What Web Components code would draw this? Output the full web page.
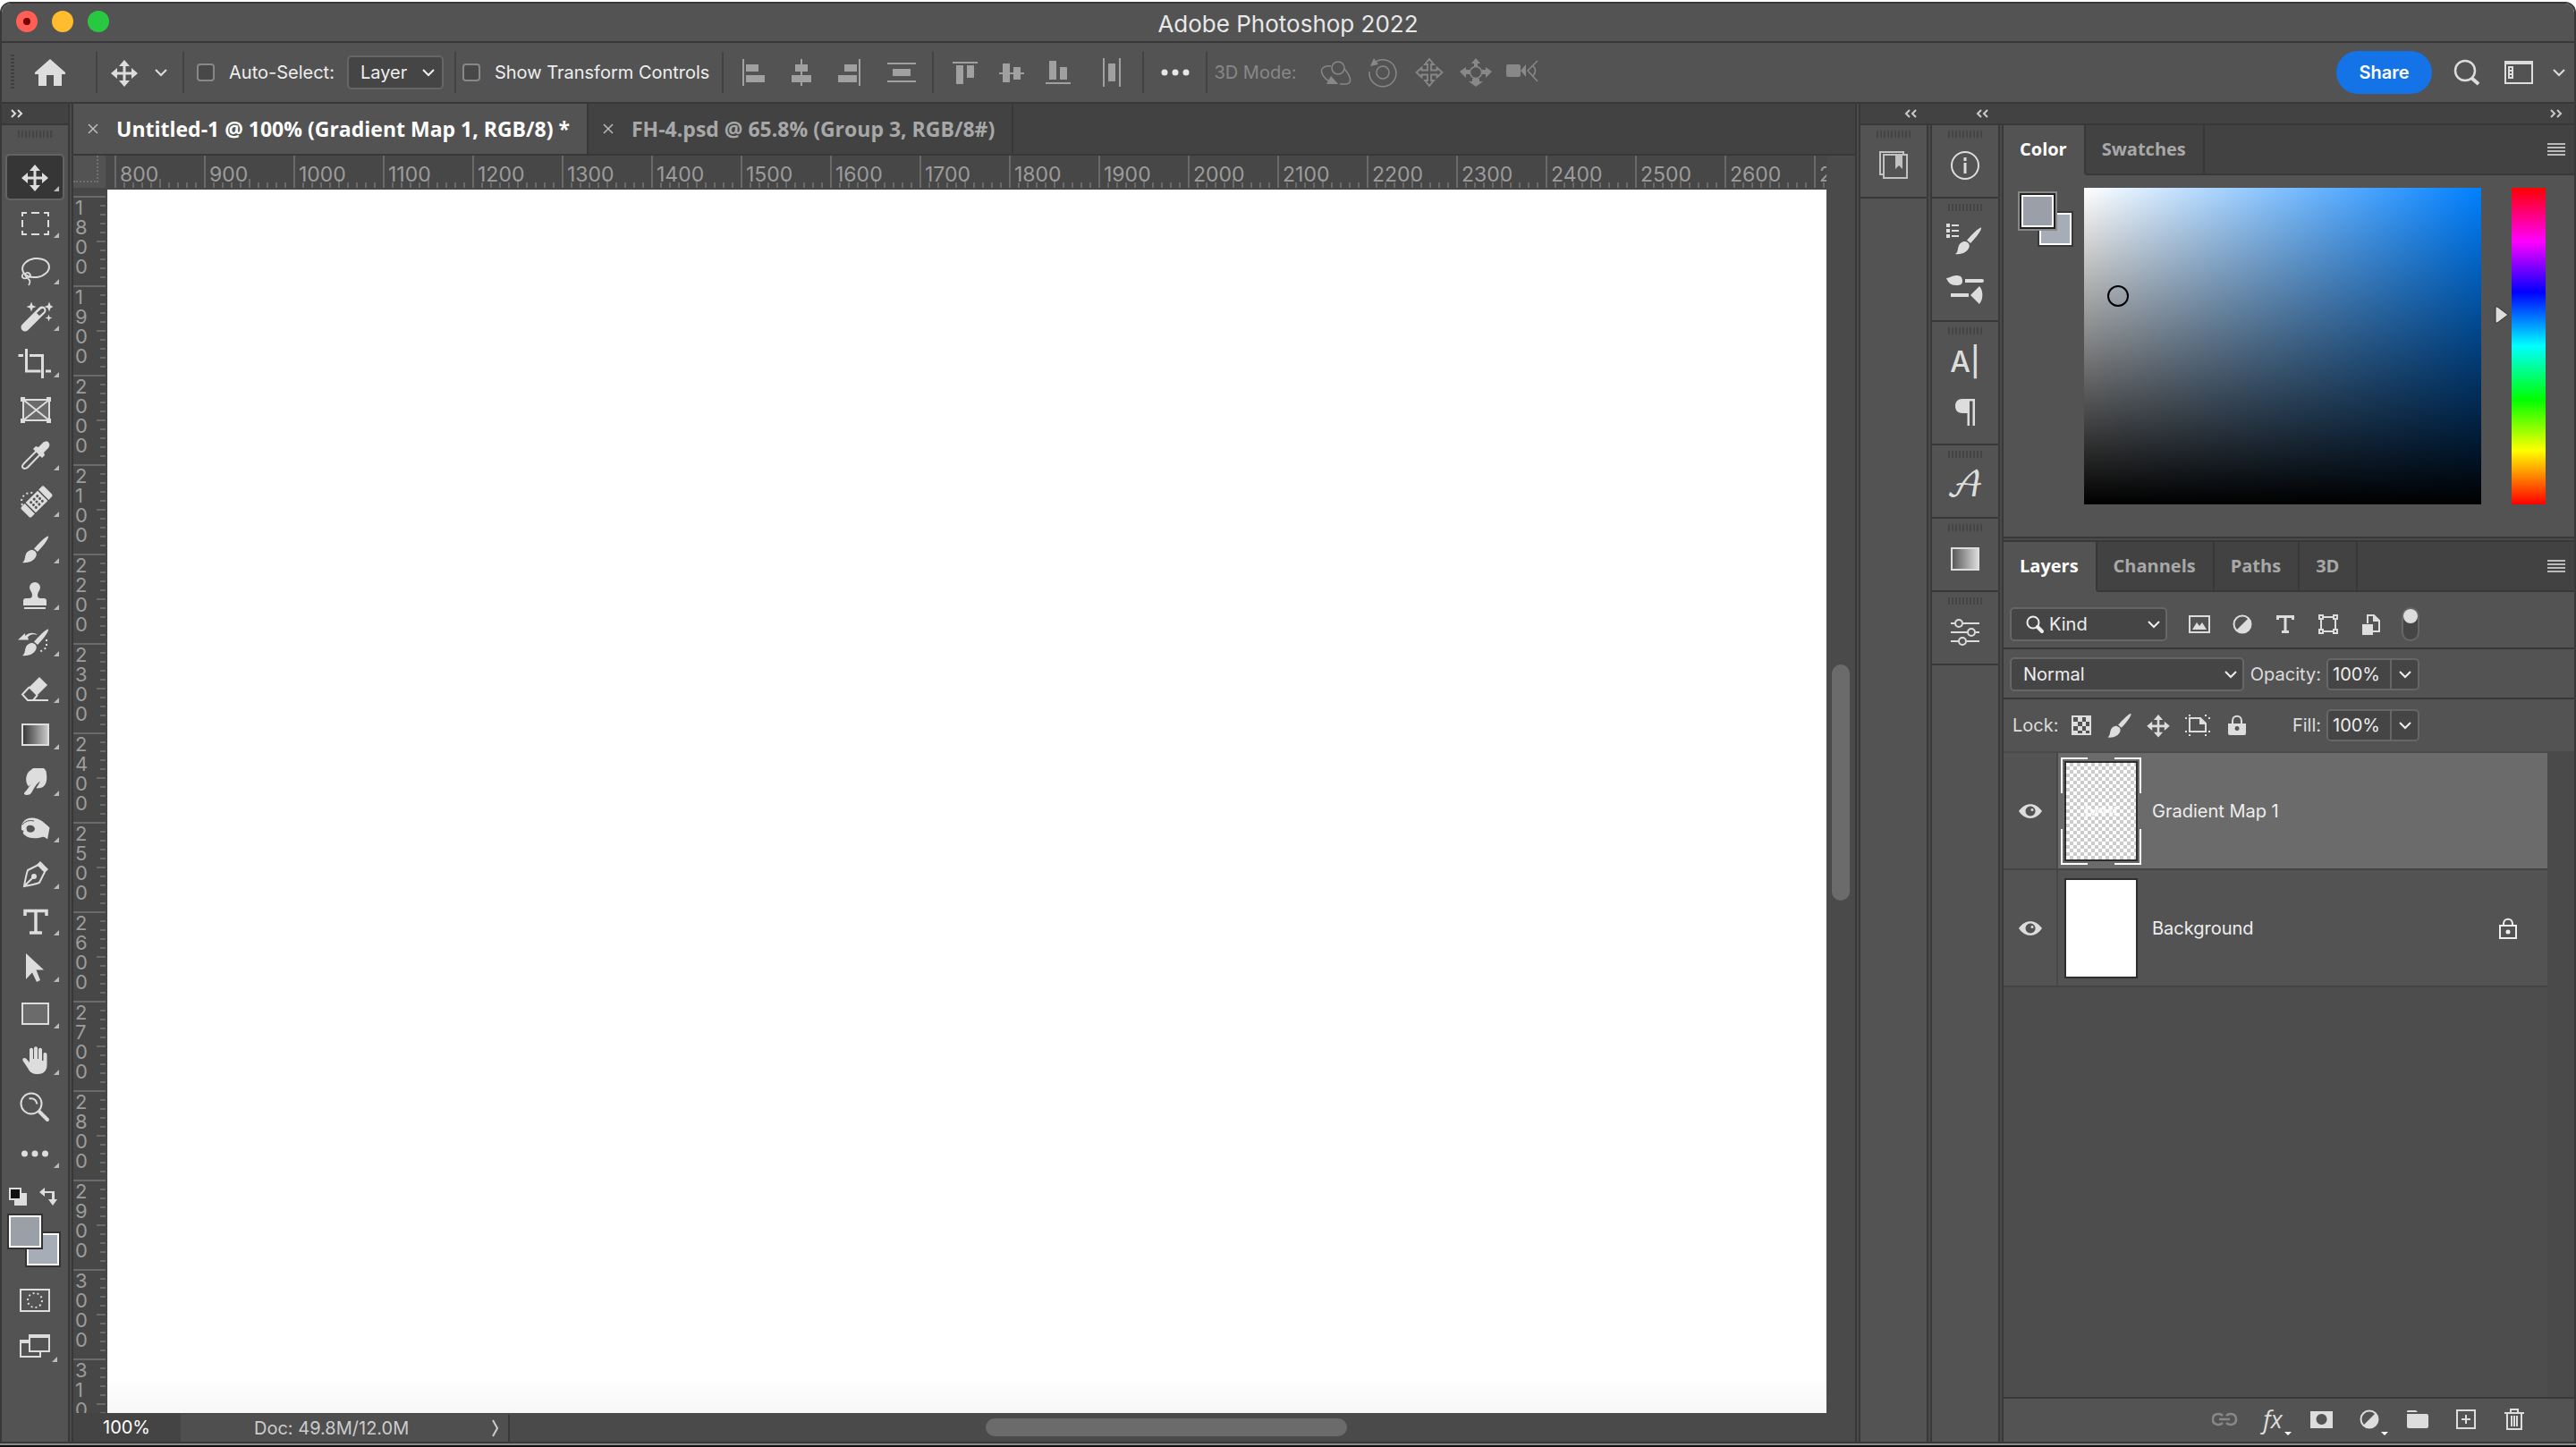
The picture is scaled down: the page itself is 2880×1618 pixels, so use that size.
<!DOCTYPE html>
<html lang="en">
<head>
<meta charset="utf-8">
<title>Adobe Photoshop 2022</title>
<style>
  body {
    margin: 0;
    background: #fff;
    color: #ddd;
    font: 20px/24px Inter, "Liberation Sans", sans-serif;
    --line: #383838;
    --bar: #535353;
    --dark: #424242;
    --gutter: #4a4a4a;
    --field: #454545;
    --edge: #666;
  }
</style>
</head>
<body>
<ps-app>
  <ps-title-bar slot="title">Adobe Photoshop 2022</ps-title-bar>
  <ps-options-bar slot="options"></ps-options-bar>
  <ps-toolbar></ps-toolbar>
  <ps-document>
    <ps-tab slot="tabs" closable selected>Untitled-1 @ 100% (Gradient Map 1, RGB/8) *</ps-tab>
    <ps-tab slot="tabs" closable>FH-4.psd @ 65.8% (Group 3, RGB/8#)</ps-tab>
  </ps-document>
  <ps-sidebar>
    <ps-dock slot="docks" groups="libraries"></ps-dock>
    <ps-dock slot="docks" groups="info|brushSettings,brushes|character,paragraph|glyphs|gradients|adjustments"></ps-dock>
    <ps-panel>
      <ps-tab slot="tabs" selected>Color</ps-tab>
      <ps-tab slot="tabs">Swatches</ps-tab>
      <ps-color-picker></ps-color-picker>
    </ps-panel>
    <ps-panel grow>
      <ps-tab slot="tabs" selected>Layers</ps-tab>
      <ps-tab slot="tabs">Channels</ps-tab>
      <ps-tab slot="tabs">Paths</ps-tab>
      <ps-tab slot="tabs">3D</ps-tab>
      <ps-layer-controls></ps-layer-controls>
      <ps-layer-list>
        <ps-layer selected thumb="transparent">Gradient Map 1</ps-layer>
        <ps-layer thumb="white" locked>Background</ps-layer>
      </ps-layer-list>
      <ps-layer-actions></ps-layer-actions>
    </ps-panel>
  </ps-sidebar>
</ps-app>

<script>
// name: [width, height, markup]. Shapes inherit fill: currentColor,
// anything in class="s" is stroked instead.
const MOVE = '<path d="M20 6l6 7h-4.500v6.500h6.500v-4.500l7 6l-7 6v-4.500h-6.500v6.500h4.500l-6 7l-6-7h4.500v-6.500h-6.500v4.500l-7-6l7-6v4.500h6.500v-6.500h-4.500z"/>'
const BRUSH = '<path d="M35 5.500c1 3-8 13.500-12 17.500l-4-3.500c5-5.500 13.500-14.500 16-14zM17.500 21c3.500 1 5 3.500 4 6.500c-1.500 5-8 8.500-15.500 7.500c3-2 2.500-4.500 3.500-8c1-4 4.500-6.500 8-6z"/>'

const ICONS = {
  move: [40, 40, MOVE],
  marquee: [40, 40, '<path class="s" d="M6 12V8h5M16 8h9M30 8h5v4M35 16v8M35 28v4h-5M25 32h-9M11 32H6v-4M6 24v-8"/>'],
  lasso: [40, 40, '<g class="s"><ellipse cx="21" cy="17.500" rx="15" ry="10.500" transform="rotate(-8 21 17.500)"/><path d="M7 24c-3 4 0 6 4 5c4-1 5-3 3-5c-2-2-5-1-5 1c0 4 9 5 4 12" style="stroke-width:1.800"/></g>'],
  wand: [40, 40, '<path class="s" d="M9 32L28 13" style="stroke-width:9;stroke-linecap:round"/><path d="M22 16l5-4.500c2-1.500 4.500.5 3 3l-5 4.500z" fill="#535353"/><path d="M16 3.500l1.500 4l4 1.500l-4 1.500l-1.500 4l-1.500-4l-4-1.500l4-1.500zM36 3.500l1.500 4l3 1.500l-3 1.500l-1.500 4l-1.500-4l-4-1.500l4-1.500zM35.500 17.500l1 3l3 1l-3 1l-1 3l-1-3l-3-1l3-1z"/>'],
  crop: [40, 40, '<path class="s" d="M1.500 11.500H7M10.500 4v25h16M32 29h6M14 11.500h14.500V37" style="stroke-width:3"/>'],
  frame: [40, 40, '<path d="M7 9h29v23H7z" fill="#6b6b6b"/><path class="s" d="M7 9h29v23H7zM7 9l29 23M36 9L7 32"/><path d="M4 6h5v5H4zM33 6h5v5h-5zM4 30h5v5H4zM33 30h5v5h-5z"/>'],
  eyedropper: [40, 40, '<path class="s" d="M22 14L8 28c-2 2-2.500 4-1.500 5c1 1.500 4 1 5.500-.5L26 18"/><path d="M18 12l3-3l3 1l4-4c3-3 6-3 7.500-1c1.500 2 1 4.500-1.500 7l-4 4l1 3l-3 3z"/>'],
  healing: [40, 40, '<g transform="rotate(-45 22 19)"><path d="M4 13q0-2 2-2h5v16H6q-2 0-2-2zM12.500 11h19v16h-19zM33 11h5q2 0 2 2v12q0 2-2 2h-5z"/><g fill="#535353"><circle cx="17" cy="15" r="1.500"/><circle cx="22" cy="15" r="1.500"/><circle cx="27" cy="15" r="1.500"/><circle cx="17" cy="19" r="1.500"/><circle cx="22" cy="19" r="1.500"/><circle cx="27" cy="19" r="1.500"/><circle cx="17" cy="23" r="1.500"/><circle cx="22" cy="23" r="1.500"/><circle cx="27" cy="23" r="1.500"/></g></g><path class="s" d="M6 23C3 16 7 8 19 9" style="stroke-dasharray:2 3"/>'],
  brush: [40, 40, BRUSH],
  stamp: [40, 40, '<path d="M20 5a6 6 0 0 1 6 6c0 3-3 5-3 8c0 3 1 4 4 4h3q3 0 3 3v5H7v-5q0-3 3-3h3c3 0 4-1 4-4c0-3-3-5-3-8a6 6 0 0 1 6-6zM8 33h24v2H8z"/>'],
  history: [40, 40, BRUSH + '<path d="M1 17.500L9 10v3c5-4 10-4 14-1c-5-1.500-8-1-11 2.500l1 3z"/><path class="s" d="M33 17v9L24 32" style="stroke-dasharray:2 3"/>'],
  eraser: [40, 40, '<path d="M25 7l9 9l-12 12l-9-9z"/><path class="s" d="M14 18l-8 8.500l6 6.500h6l5-6M11 33h24"/>'],
  gradient: [40, 40, '<defs><linearGradient id="g"><stop stop-color="#333"/><stop offset="1" stop-color="#ccc"/></linearGradient></defs><path class="s" d="M6 8h29v23H6z" style="fill:url(#g)"/>'],
  smudge: [40, 40, '<path d="M13 9l5-4h12l2.500 3c1.500 8 1.500 17-6 19l-4.500.5c-1 0 0-1.500 1-2.500l3-5.500c-4 2-7 8-9 11.500c-1.500 3-3.500 4-6.500 4c-3.500-.5-3-2.500-.5-4.500l6-8l-3 3c-4-5-3.500-12 0-16.500z"/>'],
  sponge: [40, 40, '<path fill-rule="evenodd" d="M5 22c-1-8 4-14 13-13.500c8 .5 13 6 18.500 11L34 32.500c-2-2-4-3-6-2.500c-6 2-15 2-19-2c-2-1-3-3-1.500-5zM13 17c-3 1-3 4-1 7c4 2 8 0 8-3.500c-1-3.500-4-4-7-3.500z"/><path d="M6 16q5-6 13-4" stroke="#535353" fill="none"/>'],
  pen: [40, 40, '<path class="s" d="M24 9L12 15C10 21 9 27 8 33c6-1 12-2 17-4l6-12M8 33l10-10"/><path d="M22 9l4-4l9 9l-4 4z"/><circle cx="19" cy="22" r="3"/>'],
  type: [40, 40, '<path class="s" d="M9 14V8.500h24V14M21 8.500V32M14 33h14" style="stroke-width:3.500"/>'],
  pathSelect: [40, 40, '<path d="M10 4l20 18.500h-8.500L26 34l-4 2l-5-10.500L10 33z"/>'],
  rectangle: [40, 40, '<path class="s" d="M6 8h29v23H6z" style="fill:#6b6b6b"/>'],
  hand: [40, 40, '<path d="M14 22V8c0-3 4-3 4 0v10h1V6.500c0-3 4-3 4 0V18h1V8c0-3 4-3 4 0v12l1.500 0V13c0-3 4-2 4 0v12c0 7-5 10-10 10c-6 0-9-2-11-6L6.500 20c-1-3 2-4 4-2z"/>'],
  zoom: [40, 40, '<g class="s"><circle cx="16" cy="16" r="11.500"/><path d="M13.500 10.500c5-1 8 2 9 6"/><path d="M25 25l9 9" style="stroke-width:4;stroke-linecap:round"/></g>'],
  more: [40, 40, '<circle cx="8.500" cy="20" r="3.500"/><circle cx="20" cy="20" r="3.500"/><circle cx="31.500" cy="20" r="3.500"/>'],

  corner: [6, 6, '<path d="M6 0v6H0z"/>'],
  defaults: [20, 20, '<path d="M6 6h14v14H6z"/><path d="M1 1h12v12H1z" fill="#111" stroke="#ddd" stroke-width="2"/>'],
  swap: [20, 20, '<path d="M0 5l6-5v4h11v9h3l-5 7l-5-7h4V6H6v4z"/>'],
  quickMask: [34, 26, '<path class="s" d="M1 1h32v24H1z"/><circle class="s" cx="17" cy="13" r="8" style="stroke-dasharray:2 3"/>'],
  screen: [34, 26, '<path class="s" d="M11 7H1v18h22v-6M11 2h22v17H11z"/><path d="M10 0h24v4H10zM0 6h10v4H0z"/>'],

  home: [34, 30, '<path d="M17 0l17 15v2h-4v13H21V18H13v12H4V17H0v-2z"/>'],
  chevron: [14, 8, '<path class="s" d="M1 1l6 6l6-6"/>'],
  chevronRight: [10, 20, '<path class="s" d="M2 1l5 9l-5 9"/>'],
  alignLeft: [28, 30, '<path d="M0 0h2v30H0zM4 6h14v8H4zM4 18h21v8H4z"/>'],
  alignCenter: [28, 30, '<path d="M13 0h2v30h-2zM7 6h14v8H7zM3 18h22v8H3z"/>'],
  alignRight: [28, 30, '<path d="M26 0h2v30h-2zM10 6h14v8H10zM3 18h21v8H3z"/>'],
  distributeV: [32, 22, '<path d="M0 0h32v2H0zM6 7h20v8H6zM0 20h32v2H0z"/>'],
  alignTop: [28, 30, '<path d="M0 3h28v2H0zM4 7h8v21H4zM16 7h8v14h-8z"/>'],
  alignMiddle: [28, 30, '<path d="M0 15h28v2H0zM4 5h8v21H4zM16 9h8v14h-8z"/>'],
  alignBottom: [28, 30, '<path d="M0 26h28v2H0zM4 2h8v21H4zM16 9h8v14h-8z"/>'],
  distributeH: [20, 32, '<path d="M0 0h2v32H0zM18 0h2v32h-2zM6 6h8v20H6z"/>'],
  dots: [32, 8, '<circle cx="4" cy="4" r="3.500"/><circle cx="16" cy="4" r="3.500"/><circle cx="28" cy="4" r="3.500"/>'],
  orbit: [36, 32, '<g class="s" style="stroke-width:1.500"><circle cx="20" cy="11" r="7"/><path d="M12 9C4 8 0 12 2 17c1 4 4 6 8 9M27 12c7 8 10 17 1 17h-6"/></g><path d="M7 29l5-9l8 9z"/>'],
  roll: [34, 32, '<g class="s" style="stroke-width:1.500"><circle cx="17" cy="16" r="7"/><path d="M9 4a15 15 0 1 1-7 11"/></g><path d="M3 9L7 0l5 7z"/>'],
  pan: [34, 34, '<path class="s" style="stroke-width:1.800" transform="translate(-3 -4)" d="M20 6l5 6h-3v6.500h6.500v-3l6 5.500l-6 5.500v-3h-6.500v6.500h3l-5 6l-5-6h3v-6.500h-6.500v3l-6-5.500l6-5.500v3h6.500v-6.500h-3z"/>'],
  slide: [36, 32, '<circle class="s" cx="18" cy="16" r="6.500" style="stroke-width:1.500"/><path d="M18 0l5 6h-3v3h-4V6h-3zM18 32l-8-6h4v-3h8v3h4zM0 15l7-5v3h4v5H7v4zM36 15l-7-5v3h-4v5h4v4z"/>'],
  camera: [36, 28, '<path d="M0 7q0-2 2-2h12q2 0 2 2v10q0 2-2 2H2q-2 0-2-2zM16 12l6-7v14z"/><path class="s" d="M35 1L24 12l11 12M30 7q5 4 0 11" style="stroke-width:1.500"/>'],
  search: [30, 28, '<g class="s"><circle cx="13" cy="12" r="11" style="stroke-width:2.500"/><path d="M20 20l8 7" style="stroke-width:4"/></g>'],
  workspace: [32, 26, '<path class="s" d="M1 1h30v24H1z"/><path d="M0 0h32v4H0z"/><path d="M4 6h6v14H4zM6 8v2h2V8zM6 12v2h2v-2zM6 16v2h2v-2z" fill-rule="evenodd"/>'],
  menu: [20, 14, '<path d="M0 0h20v2H0zM0 4h20v2H0zM0 8h20v2H0zM0 12h20v2H0z"/>'],
  close: [12, 12, '<path class="s" d="M1 1l10 10M11 1L1 11" style="stroke-width:1.500"/>'],
  expand: [16, 10, '<path class="s" d="M2 1l4 4l-4 4M9 1l4 4l-4 4"/>'],
  collapse: [16, 10, '<path class="s" d="M7 1L3 5l4 4M14 1l-4 4l4 4"/>'],

  libraries: [32, 32, '<g opacity=".8"><path class="s" d="M5 4h26v26H5zM4 26H1V1h26v3"/><path d="M18 4h8v16l-4-4l-4 4z"/></g>'],
  info: [34, 34, '<circle class="s" cx="17" cy="17" r="15"/><path d="M15.500 8h3v4h-3zM15.500 14h3v12h-3z"/>'],
  brushSettings: [42, 36, '<path d="M0 1h4v4H0zM6 2h8v2H6zM0 7h4v4H0zM6 8h8v2H6zM0 13h4v4H0zM6 14h8v2H6z"/><g transform="translate(4 0)">' + BRUSH + '</g>'],
  brushes: [42, 34, '<g transform="translate(0 2)"><path d="M0 3c4 0 6-3 11-3c5 0 7 2 7 6s-2 5-7 5C5 11 2 8 0 3zM21 4h19q2 0 2 2t-2 2H21zM5 20h20v4H5zM27 22l10-10c4 4 5 14 0 20z"/></g>'],
  paragraph: [24, 32, '<path d="M23 1v30h-2.500V3.500H17V31h-2.500V17H9C4 17 1 14 1 9s3-8 8-8z"/>'],
  gradients: [32, 26, '<defs><linearGradient id="g"><stop stop-color="#555"/><stop offset="1" stop-color="#ddd"/></linearGradient></defs><path class="s" d="M1 1h30v24H1z" style="fill:url(#g)"/>'],
  adjustments: [32, 32, '<g class="s"><path d="M0 6h4M14 6h18M0 16h18M28 16h4M0 26h8M18 26h14"/><circle cx="9" cy="6" r="4"/><circle cx="23" cy="16" r="4"/><circle cx="13" cy="26" r="4"/></g>'],

  find: [20, 20, '<g class="s"><circle cx="8" cy="8" r="6.500"/><path d="M13 13l5 5" style="stroke-width:4;stroke-linecap:round"/></g>'],
  image: [24, 20, '<path class="s" d="M1 1h22v18H1z"/><path d="M4 16l5-8l3 4l3-4l5 8z"/>'],
  adjust: [22, 22, '<circle class="s" cx="11" cy="11" r="9.500"/><path d="M18 4L4 18A9.500 9.500 0 0 0 18 4z"/>'],
  text: [20, 22, '<path class="s" d="M1.500 6V2.500h17V6M10 2v17M6 19.500h8" style="stroke-width:3"/>'],
  shape: [24, 24, '<g class="s"><path d="M6 4h12M20 6v12M18 20H6M4 18V6"/><path d="M2 2h4v4H2zM18 2h4v4h-4zM2 18h4v4H2zM18 18h4v4h-4z"/></g>'],
  smart: [20, 24, '<path class="s" d="M6 11V2h7l6 6v12h-7"/><path d="M12 1v8h8zM0 12h12v12H0z"/>'],
  checker: [22, 22, '<path fill-rule="evenodd" d="M0 0h22v22H0zM2 2v5h5V2zM12 2v5h4V2zM7 7v5h5V7zM16 7v5h4V7zM2 12v5h5v-5zM12 12v5h4v-5zM7 17v3h5v-3zM16 17v3h4v-3z"/>'],
  artboard: [28, 24, '<path class="s" d="M5 4h12l6 6v9H5z"/><path d="M16 3v8h8zM4 0h2v2H4zM0 3h2v2H0zM22 0h2v2h-2zM26 3h2v2h-2zM0 18h2v2H0zM4 22h2v2H4zM26 18h2v2h-2zM22 22h2v2h-2z"/>'],
  lock: [20, 24, '<path class="s" d="M5 11V7c0-7 10-7 10 0v4"/><path fill-rule="evenodd" d="M0 10h20v11q0 2-2 2H2q-2 0-2-2zM10 13a2.500 2.500 0 1 0 .1 0z"/>'],
  lockOutline: [20, 24, '<g class="s"><path d="M5 8V7c0-7 10-7 10 0v1M1 9h18v14H1z"/></g><circle cx="10" cy="16" r="2.500"/>'],
  eye: [26, 16, '<path fill-rule="evenodd" d="M0 8C7-2.500 19-2.500 26 8C19 18.500 7 18.500 0 8zM13 2.500a5.500 5.500 0 1 0 .1 0z"/><circle cx="15" cy="6.500" r="1.500"/>'],
  link: [28, 14, '<g class="s"><path d="M12 3C9 0 1 0 1 7s8 7 11 4M16 3c3-3 11-3 11 4s-8 7-11 4M8 7h12" style="stroke-width:2.500"/></g>'],
  mask: [25, 20, '<path fill-rule="evenodd" d="M0 1h25v19H0zM12.500 4a6 6 0 1 0 .1 0z"/>'],
  folder: [24, 20, '<path d="M0 1q0-1 2-1h8l2 2H0zM0 4h22q2 0 2 2v12q0 2-2 2H2q-2 0-2-2z"/>'],
  plus: [22, 22, '<path class="s" d="M1 1h20v20H1zM11 6v10M6 11h10"/>'],
  trash: [22, 24, '<path class="s" d="M0 5h22M7 4V1h8v3M3 6v17h16V6M8 8v12M11 8v12M14 8v12"/>'],
  down: [8, 4, '<path d="M0 0h8L4 4z" fill="#fff"/>']
}

const icon = (name, scale = 1) => {
  const [w, h, markup] = ICONS[name]
  return `<svg class="icon" aria-hidden="true" width="${w * scale}" height="${h * scale}" viewBox="0 0 ${w} ${h}">${markup}</svg>`
}

const BASE = `
  * { box-sizing: border-box; }
  button {
    display: flex; align-items: center; justify-content: center;
    margin: 0; padding: 0; border: 0; background: none;
    color: inherit; font: inherit; cursor: pointer;
  }
  .icon { display: block; flex: none; fill: currentColor; overflow: visible; }
  .s { fill: none; stroke: currentColor; stroke-width: 2; }
  .grip {
    width: 38px; height: 8px; margin: 0 auto;
    background: repeating-linear-gradient(90deg, #444 0 2px, transparent 2px 4px);
  }
`

/**
 * Shared base: attaches an open root and fills it from render().
 */
class PsElement extends HTMLElement {
  connectedCallback () {
    if (this.shadowRoot) return
    this.attachShadow({ mode: 'open' }).innerHTML =
      `<style>${BASE}${this.styles()}</style>${this.render()}`
  }
  styles () { return '' }
  render () { return '<slot></slot>' }
}

customElements.define('ps-app', class extends PsElement {
  styles () {
    return `
      :host {
        display: flex; flex-direction: column;
        box-sizing: border-box; height: 100vh; padding-top: 2px;
        border-bottom: 2px solid #111;
      }
      .window {
        flex: 1; min-height: 0; display: flex; flex-direction: column;
        border: 2px solid var(--line); border-radius: 12px 12px 0 0; overflow: hidden;
      }
      .shade { height: 2px; background: #8a8a8a; }
      main { flex: 1; min-height: 0; display: flex; gap: 2px; background: var(--gutter); }
    `
  }
  render () {
    return `
      <div class="window">
        <slot name="title"></slot>
        <slot name="options"></slot>
        <main><slot></slot></main>
      </div>
      <div class="shade"></div>`
  }
})

customElements.define('ps-title-bar', class extends PsElement {
  styles () {
    return `
      :host {
        display: grid; grid-template-columns: 1fr auto 1fr; align-items: center;
        height: 44px; box-sizing: border-box; padding: 0 16px;
        background: var(--bar); border-bottom: 2px solid var(--line);
      }
      .lights { display: flex; gap: 16px; padding-bottom: 2px; }
      .lights button { width: 24px; height: 24px; border-radius: 50%; background: #28c840; }
      .lights .close { background: #ff5f57; }
      .lights .close::after { content: ""; width: 8px; height: 8px; border-radius: 50%; background: #700; }
      .lights .min { background: #febc2e; }
      h1 { margin: 0; padding-top: 3px; font-size: 26px; line-height: 32px; font-weight: 400; color: #e8e8e8; }
    `
  }
  render () {
    return `
      <div class="lights">
        <button class="close" aria-label="Close"></button>
        <button class="min" aria-label="Minimize"></button>
        <button aria-label="Zoom"></button>
      </div>
      <h1><slot></slot></h1>`
  }
})

customElements.define('ps-options-bar', class extends PsElement {
  styles () {
    return `
      :host {
        display: flex; align-items: center; height: 68px; box-sizing: border-box;
        padding: 0 10px; background: var(--bar); border-bottom: 2px solid var(--line);
        color: #eee; white-space: nowrap;
      }
      .dots { width: 4px; height: 40px; background: repeating-linear-gradient(#404040 0 2px, transparent 2px 4px); }
      .home { margin: 0 34px 0 23px; color: #ddd; }
      hr { width: 2px; height: 46px; margin: 0; border: 0; background: #424242; }
      .preset { gap: 14px; padding: 0 17px 0 10px; color: #ddd; }
      .check { display: flex; align-items: center; gap: 16px; }
      .auto { padding: 0 14px; }
      .transform { padding: 0 14px 0 7px; }
      input {
        appearance: none; width: 20px; height: 20px; margin: 0;
        border: 2px solid #888; border-radius: 4px; background: #484848;
      }
      .pick {
        display: flex; align-items: center; width: 108px; height: 38px; margin-right: 12px;
        padding-right: 8px; background: var(--field); border: 2px solid var(--edge); border-radius: 5px;
      }
      .pick .icon { margin-left: -14px; pointer-events: none; }
      select {
        appearance: none; flex: 1; min-width: 0; height: 100%; padding: 0 14px 0 13px;
        border: 0; background: none; color: inherit; font: inherit;
      }
      .group { display: flex; padding-left: 9px; color: #a0a0a0; }
      .group button { width: 52px; height: 40px; }
      .group button:last-child { width: 68px; }
      .more { width: 69px; height: 40px; color: #e8e8e8; }
      .mode { display: flex; align-items: center; padding-left: 7px; color: #888; }
      .mode span { margin-right: 18px; }
      .mode button { width: 52px; height: 40px; }
      .end { display: flex; align-items: center; margin-left: auto; color: #ddd; }
      .share {
        width: 107px; height: 48px; margin-right: 24px; border-radius: 24px;
        background: #1473e6; color: #fff; font-weight: 600;
      }
      .end .search { margin-right: 27px; }
      .end .space { gap: 22px; }
    `
  }
  render () {
    const buttons = names => names.map(n => `<button aria-label="${n}">${icon(n)}</button>`).join('')
    return `
      <div class="dots"></div>
      <button class="home" aria-label="Home">${icon('home')}</button>
      <hr>
      <button class="preset" aria-label="Move tool presets">${icon('move')}${icon('chevron')}</button>
      <hr>
      <label class="check auto"><input type="checkbox">Auto-Select:</label>
      <div class="pick">
        <select aria-label="Auto-Select target"><option>Layer</option><option>Group</option></select>
        ${icon('chevron')}
      </div>
      <hr>
      <label class="check transform"><input type="checkbox">Show Transform Controls</label>
      <hr>
      <div class="group">${buttons(['alignLeft', 'alignCenter', 'alignRight', 'distributeV'])}</div>
      <hr>
      <div class="group">${buttons(['alignTop', 'alignMiddle', 'alignBottom', 'distributeH'])}</div>
      <hr>
      <button class="more" aria-label="More options">${icon('dots')}</button>
      <hr>
      <div class="mode"><span>3D Mode:</span>${buttons(['orbit', 'roll', 'pan', 'slide', 'camera'])}</div>
      <div class="end">
        <button class="share">Share</button>
        <button class="search" aria-label="Search">${icon('search')}</button>
        <button class="space" aria-label="Workspace">${icon('workspace')}${icon('chevron')}</button>
      </div>`
  }
})

customElements.define('ps-toolbar', class extends PsElement {
  styles () {
    return `
      :host {
        display: block; flex: none; width: 76px; box-sizing: border-box;
        background: var(--bar); border-right: 2px solid var(--line); color: #ddd;
      }
      .head {
        justify-content: start; width: 100%; height: 24px; padding-left: 9px;
        background: var(--dark); border-bottom: 2px solid var(--line);
      }
      .grip { margin: 6px auto 18px; }
      .tools { display: grid; justify-content: center; }
      .tools button {
        width: 66px; height: 52px; border: 2px solid transparent; border-radius: 5px;
        display: grid; grid-template-columns: 11px 40px auto; justify-content: start;
      }
      .tools button .icon { grid-column: 2; }
      .tools button .icon + .icon { grid-column: 3; align-self: end; margin: 0 0 8px 1px; color: #bbb; }
      .tools [aria-pressed=true] { background: #363636; border-color: #636363; }
      .tiny { display: flex; justify-content: space-between; padding: 12px 12px 9px 8px; }
      .colors { display: grid; grid-template: 20px 16px 20px / 20px 16px 20px; padding: 2px 0 0 8px; }
      .colors button { border: 2px solid #fff; outline: 2px solid #333; }
      .fg { grid-area: 1 / 1 / 3 / 3; background: #9a9fa8; z-index: 1; }
      .bg { grid-area: 2 / 2 / 4 / 4; background: #a6adb7; }
      .modes { display: grid; gap: 25px; justify-content: center; padding-top: 26px; }
      .modes button { position: relative; }
      .modes .icon + .icon { position: absolute; right: -8px; bottom: -5px; color: #bbb; }
    `
  }
  render () {
    const tools = ['move', 'marquee', 'lasso', 'wand', 'crop', 'frame', 'eyedropper', 'healing', 'brush', 'stamp',
      'history', 'eraser', 'gradient', 'smudge', 'sponge', 'pen', 'type', 'pathSelect', 'rectangle', 'hand', 'zoom', 'more']
    const single = ['frame', 'zoom']
    return `
      <button class="head" aria-label="Expand toolbar">${icon('expand')}</button>
      <div class="grip"></div>
      <div class="tools">
        ${tools.map(t => `<button aria-label="${t}" aria-pressed="${t === 'move'}">${icon(t)}${single.includes(t) ? '' : icon('corner')}</button>`).join('')}
      </div>
      <div class="tiny">
        <button aria-label="Default colors">${icon('defaults')}</button>
        <button aria-label="Swap colors">${icon('swap')}</button>
      </div>
      <div class="colors">
        <button class="fg" aria-label="Foreground color"></button>
        <button class="bg" aria-label="Background color"></button>
      </div>
      <div class="modes">
        <button aria-label="Quick mask">${icon('quickMask')}</button>
        <button aria-label="Screen mode">${icon('screen')}${icon('corner')}</button>
      </div>`
  }
})

customElements.define('ps-tab', class extends PsElement {
  styles () {
    return `
      :host {
        display: block; box-sizing: border-box; height: 56px;
        border-right: 2px solid var(--line); border-bottom: 2px solid var(--line);
        color: #a8a8a8; font: bold 20px/28px "Open Sans", "Noto Sans", sans-serif; white-space: nowrap;
      }
      :host([selected]) { background: var(--bar); color: #fff; }
      :host([selected]:not([closable])) { border-bottom-color: var(--bar); }
      :host([closable]) { height: 58px; font-size: 23px; }
      .tab { display: flex; align-items: center; height: 100%; }
      .label { padding: 0 19px 0 18px; height: 100%; }
      .close { width: 12px; height: 12px; margin-left: 16px; color: #bbb; }
      .close + .label { padding-left: 20px; }
    `
  }
  render () {
    const close = this.hasAttribute('closable')
      ? `<button class="close" aria-label="Close tab">${icon('close')}</button>` : ''
    return `<div class="tab">${close}<button class="label" role="tab"><slot></slot></button></div>`
  }
})

customElements.define('ps-ruler', class extends PsElement {
  styles () {
    return `
      :host { display: flex; overflow: hidden; padding-left: 8px; color: #9c9c9c; font-size: 23px; line-height: 22px; }
      span {
        flex: none; width: 100px; height: 36px; padding: 10px 0 0 6px;
        background:
          linear-gradient(#6a6a6a, #6a6a6a) 0 0 / 2px 36px no-repeat,
          linear-gradient(#6a6a6a, #6a6a6a) 50px 100% / 2px 10px no-repeat,
          repeating-linear-gradient(90deg, #6a6a6a 0 2px, transparent 2px 10px) 0 100% / 100% 6px no-repeat;
      }
      :host([vertical]) { flex-direction: column; padding: 7px 0 0; }
      :host([vertical]) span {
        width: 36px; height: 100px; padding: 2px 18px 0 2px; word-break: break-all; font-size: 22px;
        background:
          linear-gradient(#6a6a6a, #6a6a6a) 0 0 / 36px 2px no-repeat,
          linear-gradient(#6a6a6a, #6a6a6a) 100% 50px / 10px 2px no-repeat,
          repeating-linear-gradient(#6a6a6a 0 2px, transparent 2px 10px) 100% 0 / 6px 100% no-repeat;
      }
    `
  }
  render () {
    const from = Number(this.getAttribute('from'))
    const to = Number(this.getAttribute('to'))
    let marks = ''
    for (let n = from; n <= to; n += 100) marks += `<span>${n}</span>`
    return marks
  }
})

customElements.define('ps-document', class extends PsElement {
  styles () {
    return `
      :host {
        flex: 1; min-width: 0; display: flex; flex-direction: column; background: #474747;
        border: solid var(--line); border-width: 0 2px;
      }
      .tabs { display: flex; flex: none; height: 58px; background: var(--dark); border-bottom: 2px solid var(--line); }
      .tabs ::slotted(*) { margin-bottom: -2px; }
      .work { flex: 1; min-height: 0; display: grid; grid-template: 38px minmax(0, 1fr) 32px / 38px minmax(0, 1fr) 32px; }
      .corner { margin: 0 2px 2px 0; background: var(--bar); display: grid; grid-template: 1fr 6px / 1fr 8px; }
      .corner::before { content: ""; border: dotted #707070; border-width: 0 2px 2px 0; grid-area: 1 / 1; }
      .canvas { background: linear-gradient(#fff calc(100% - 40px), #f7f7f7); }
      .vscroll, .hscroll { display: flex; background: var(--gutter); }
      .vscroll { grid-area: 1 / 3 / 3; flex-direction: column; padding: 0 6px; }
      .vscroll i { flex: 264 0 0; background: #6b6b6b; border-radius: 10px; }
      .vscroll::before { content: ""; flex: 569 0 0; }
      .vscroll::after { content: ""; flex: 573 0 0; }
      .status { grid-column: 1 / 4; display: flex; background: var(--gutter); }
      .zoom {
        width: 120px; padding: 0 0 0 33px; border: 0; background: #444; color: #fff; font: inherit; flex: none;
      }
      .doc {
        display: flex; align-items: center; width: 368px; margin-top: 2px; padding: 0 7px 0 82px;
        justify-content: space-between; background: #4f4f4f; color: #ccc; border-right: 2px solid var(--line);
      }
      .doc button { padding: 0 2px 0 10px; }
      .hscroll { flex: 1; padding: 6px 0; }
      .hscroll::before { content: ""; flex: 532 0 0; }
      .hscroll i { flex: 404 0 0; background: #6b6b6b; border-radius: 10px; }
      .hscroll::after { content: ""; flex: 568 0 0; }
    `
  }
  render () {
    return `
      <div class="tabs" role="tablist"><slot name="tabs"></slot></div>
      <div class="work">
        <div class="corner"></div>
        <ps-ruler from="800" to="2700"></ps-ruler>
        <div class="vscroll"><i></i></div>
        <ps-ruler vertical from="1800" to="3100"></ps-ruler>
        <div class="canvas"></div>
        <div class="status">
          <input class="zoom" aria-label="Zoom level" value="100%">
          <div class="doc">Doc: 49.8M/12.0M<button aria-label="Status menu">${icon('chevronRight')}</button></div>
          <div class="hscroll"><i></i></div>
        </div>
      </div>`
  }
})

customElements.define('ps-sidebar', class extends PsElement {
  styles () {
    return `
      :host {
        flex: none; width: 800px; box-sizing: border-box; display: flex; flex-direction: column;
        border-left: 2px solid var(--line); background: var(--gutter);
      }
      .head { display: flex; height: 24px; background: var(--dark); border-bottom: 2px solid var(--line); color: #ccc; }
      .head button { justify-content: end; width: 80px; padding-right: 12px; }
      .head button:first-child { width: 76px; }
      .head button:last-child { flex: 1; }
      .row { flex: 1; min-height: 0; display: flex; gap: 2px; }
      .panels { flex: 1; min-width: 0; display: flex; flex-direction: column; gap: 2px; border-left: 2px solid var(--line); }
    `
  }
  render () {
    return `
      <div class="head">
        <button aria-label="Expand libraries">${icon('collapse')}</button>
        <button aria-label="Expand dock">${icon('collapse')}</button>
        <button aria-label="Collapse panels">${icon('expand')}</button>
      </div>
      <div class="row">
        <slot name="docks"></slot>
        <div class="panels"><slot></slot></div>
      </div>`
  }
})

customElements.define('ps-dock', class extends PsElement {
  styles () {
    return `
      :host {
        display: block; flex: none; width: 78px; box-sizing: border-box; background: var(--bar); color: #ddd;
        border: solid var(--line); border-width: 0 2px;
      }
      :host(:first-child) { width: 76px; border-left: 0; }
      section { padding: 6px 0 7px; border-bottom: 2px solid var(--line); }
      .grip { margin-bottom: 3px; }
      section button { width: 100%; height: 56px; }
      .char { font: 500 32px/40px Inter, sans-serif; }
      .glyph { font: 40px/40px "DejaVu Math TeX Gyre", "DejaVu Serif", serif; }
    `
  }
  render () {
    const letters = {
      character: '<span class="char">A|</span>',
      glyphs: '<span class="glyph">𝒜</span>'
    }
    return this.getAttribute('groups').split('|').map(group => `
      <section>
        <div class="grip"></div>
        ${group.split(',').map(n => `<button aria-label="${n}">${letters[n] || icon(n)}</button>`).join('')}
      </section>`).join('')
  }
})

customElements.define('ps-panel', class extends PsElement {
  styles () {
    return `
      :host { display: flex; flex-direction: column; background: var(--bar); border-bottom: 2px solid var(--line); }
      :host([grow]) { flex: 1; min-height: 0; border-top: 2px solid var(--line); border-bottom: 0; }
      .tabs { display: flex; flex: none; background: var(--dark); }
      .rest {
        flex: 1; display: flex; align-items: center; justify-content: end; padding-right: 10px;
        border-bottom: 2px solid var(--line); color: #bbb;
      }
    `
  }
  render () {
    return `
      <div class="tabs" role="tablist">
        <slot name="tabs"></slot>
        <div class="rest"><button aria-label="Panel menu">${icon('menu')}</button></div>
      </div>
      <slot></slot>`
  }
})

customElements.define('ps-color-picker', class extends PsElement {
  styles () {
    return `
      :host { display: flex; padding: 14px 32px 36px 16px; }
      .chips { display: grid; grid-template: 20px 16px 20px / 20px 16px 20px; width: 74px; padding: 8px 0 0 4px; }
      .chips button { border: 2px solid #fff; }
      .fg { grid-area: 1 / 1 / 3 / 3; background: #9a9fa8; outline: 2px solid #222; box-shadow: 0 0 0 4px #888; z-index: 1; }
      .bg { grid-area: 2 / 2 / 4 / 4; background: #a6adb7; outline: 2px solid #383838; }
      .field {
        position: relative; flex: 1; height: 354px;
        background: linear-gradient(transparent, #000), linear-gradient(90deg, #fff, #0080ff);
      }
      .field i {
        position: absolute; left: 38px; top: 121px; transform: translate(-50%, -50%);
        width: 24px; height: 24px; border: 2px solid #000; border-radius: 50%;
      }
      .hue {
        position: relative; width: 38px; margin-left: 34px;
        background: linear-gradient(#f00, #f0f 17%, #00f 33%, #0ff 50%, #0f0 67%, #ff0 83%, #f00);
      }
      .hue svg { position: absolute; left: -20px; top: 40%; transform: translateY(-50%); }
    `
  }
  render () {
    return `
      <div class="chips">
        <button class="fg" aria-label="Foreground color"></button>
        <button class="bg" aria-label="Background color"></button>
      </div>
      <div class="field"><i></i></div>
      <div class="hue"><svg width="18" height="20" viewBox="0 0 18 20"><path d="M2 1h2l12 9l-12 9H2z" fill="#ddd" stroke="#333"/></svg></div>`
  }
})

customElements.define('ps-layer-controls', class extends PsElement {
  styles () {
    return `
      :host { display: block; color: #ddd; }
      .row { display: flex; align-items: center; padding: 0 6px 0 7px; border-bottom: 2px solid var(--line); }
      .filter { height: 64px; padding-top: 10px; }
      .blend { height: 56px; padding-top: 2px; }
      .lock { height: 60px; border-color: var(--gutter); }
      .pick {
        display: flex; align-items: center; height: 38px; padding-right: 6px; color: #eee;
        background: var(--field); border: 2px solid var(--edge); border-radius: 5px;
      }
      .kind { width: 176px; padding-left: 16px; }
      .mode { width: 262px; }
      select {
        appearance: none; flex: 1; min-width: 0; height: 100%; padding: 0 14px 0 13px;
        border: 0; background: none; color: inherit; font: inherit;
      }
      .kind select { padding-left: 6px; }
      select + .icon { margin-left: -14px; pointer-events: none; }
      .filters { display: flex; margin-left: 12px; }
      .filters button { width: 48px; height: 38px; }
      .toggle {
        appearance: none; width: 20px; height: 38px; margin: 0 0 0 10px; border: 2px solid var(--edge);
        border-radius: 10px; background: var(--field);
      }
      .toggle::before { content: ""; display: block; width: 16px; height: 16px; border-radius: 50%; background: #ddd; }
      .opacity { width: 86px; text-align: right; white-space: nowrap; }
      .fill { margin-left: auto; }
      .value {
        display: flex; width: 104px; height: 36px; margin-left: 6px; color: #eee;
        background: var(--field); border: 2px solid var(--edge); border-radius: 5px;
      }
      .value input { width: 71px; padding: 0 0 0 5px; border: 0; border-right: 2px solid var(--edge); background: none; color: inherit; font: inherit; }
      .value button { flex: 1; }
      .left { display: flex; align-items: center; width: 348px; padding-left: 3px; }
      .locks { display: flex; margin-left: 5px; }
      .locks button { width: 44px; height: 36px; }
      .locks button:first-child { width: 41px; }
    `
  }
  render () {
    const value = (id, label) => `
      <div class="value">
        <input id="${id}" value="100%">
        <button aria-label="${label} slider">${icon('chevron')}</button>
      </div>`
    return `
      <div class="row filter">
        <div class="pick kind">${icon('find')}<select aria-label="Filter type"><option>Kind</option><option>Name</option></select>${icon('chevron')}</div>
        <div class="filters">
          ${['image', 'adjust', 'text', 'shape', 'smart'].map(n => `<button aria-label="Filter ${n}">${icon(n)}</button>`).join('')}
        </div>
        <input class="toggle" type="checkbox" aria-label="Layer filtering" checked>
      </div>
      <div class="row blend">
        <div class="pick mode"><select aria-label="Blend mode"><option>Normal</option><option>Multiply</option></select>${icon('chevron')}</div>
        <label class="opacity" for="opacity">Opacity:</label>
        ${value('opacity', 'Opacity')}
      </div>
      <div class="row lock">
        <div class="left">Lock:
          <div class="locks">
            <button aria-label="Lock transparency">${icon('checker')}</button>
            <button aria-label="Lock pixels">${icon('brush', 0.9)}</button>
            <button aria-label="Lock position">${icon('move', 0.85)}</button>
            <button aria-label="Lock artboard">${icon('artboard')}</button>
            <button aria-label="Lock all">${icon('lock')}</button>
          </div>
          <label class="fill" for="fill">Fill:</label>
        </div>
        ${value('fill', 'Fill')}
      </div>`
  }
})

customElements.define('ps-layer-list', class extends PsElement {
  styles () {
    return `
      :host { display: block; flex: 1; min-height: 0; padding-right: 30px; background: var(--gutter); }
      .list { height: 100%; background: #4d4d4d; }
    `
  }
  render () { return '<div class="list"><slot></slot></div>' }
})

customElements.define('ps-layer', class extends PsElement {
  styles () {
    return `
      :host { display: flex; height: 131px; box-sizing: border-box; border-bottom: 2px solid #444; background: var(--bar); color: #eee; }
      .eye { width: 61px; border-right: 2px solid #474747; color: #ddd; }
      .body { flex: 1; display: flex; align-items: center; padding: 0 34px 0 3px; }
      :host([selected]) .body { background: #6b6b6b; }
      .frame { width: 90px; height: 120px; padding: 4px; border: 2px solid transparent; }
      :host([selected]) .frame {
        border: 0; padding: 6px;
        --w: linear-gradient(#fff, #fff);
        background:
          var(--w) 0 0 / 30px 2px, var(--w) 100% 0 / 30px 2px,
          var(--w) 0 100% / 30px 2px, var(--w) 100% 100% / 30px 2px,
          var(--w) 0 0 / 2px 40px, var(--w) 100% 0 / 2px 40px,
          var(--w) 0 100% / 2px 40px, var(--w) 100% 100% / 2px 40px;
        background-repeat: no-repeat;
      }
      .thumb { display: grid; place-items: center; height: 100%; background: #fff; outline: 2px solid #2e2e2e; }
      .transparent { background: repeating-conic-gradient(#ccc 0 25%, #fff 0 50%) 0 0 / 8px 8px; }
      .art { display: none; }
      .transparent .art { display: block; }
      .name { flex: 1; margin-left: 12px; }
    `
  }
  render () {
    return `
      <button class="eye" aria-label="Toggle visibility">${icon('eye')}</button>
      <div class="body">
        <div class="frame">
          <div class="thumb ${this.getAttribute('thumb')}">
            <svg class="art" width="36" height="14" viewBox="0 0 36 14"><path d="M2 1v12M5 2l5 10M13 1v12M17 3l3 9M22 2v10M27 1l3 12M34 2v10" stroke="#fff" stroke-width="3" opacity=".8"/></svg>
          </div>
        </div>
        <span class="name"><slot></slot></span>
        ${this.hasAttribute('locked') ? icon('lockOutline') : ''}
      </div>`
  }
})

customElements.define('ps-layer-actions', class extends PsElement {
  styles () {
    return `
      :host {
        display: flex; justify-content: end; height: 50px; box-sizing: border-box; padding-right: 40px;
        border-top: 2px solid var(--line); color: #ddd;
      }
      button { position: relative; width: 54px; padding-bottom: 2px; }
      button:first-of-type { color: #888; }
      .fx { font: italic 27px/32px "Open Sans", sans-serif; }
      .icon + .icon, .fx + .icon { position: absolute; right: 6px; bottom: 7px; }
    `
  }
  render () {
    return `
      <button aria-label="Link layers">${icon('link')}</button>
      <button aria-label="Layer style"><span class="fx">fx</span>${icon('down')}</button>
      <button aria-label="Add mask">${icon('mask')}</button>
      <button aria-label="New adjustment layer">${icon('adjust')}${icon('down')}</button>
      <button aria-label="New group">${icon('folder')}</button>
      <button aria-label="New layer">${icon('plus')}</button>
      <button aria-label="Delete layer">${icon('trash')}</button>`
  }
})
</script>
</body>
</html>
